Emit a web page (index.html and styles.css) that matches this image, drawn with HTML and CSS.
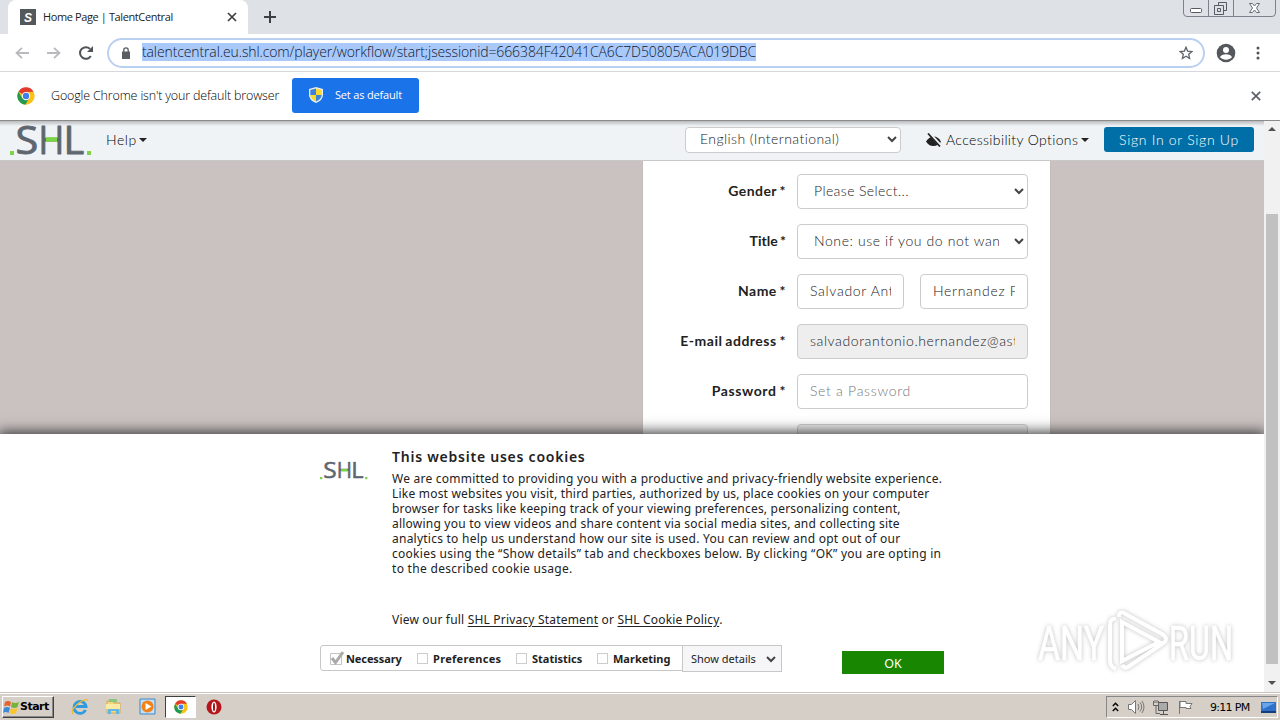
FILE: index.html
```
<!DOCTYPE html>
<html lang="en">
<head>
<meta charset="utf-8">
<title>Home Page | TalentCentral</title>
<link rel="stylesheet" href="styles.css">
</head>
<body>
<svg width="0" height="0" class="defs">
  <symbol id="chrome" viewBox="0 0 48 48">
    <circle cx="24" cy="24" r="23" fill="#fbc116"/>
    <path d="M24 24 4 12.500A23 23 0 0 1 44 12.500L24 13z" fill="#e33b2e"/>
    <path d="M4 12.500A23 23 0 0 0 22 47L33 29 24 35 14 30z" fill="#219a50"/>
    <circle cx="24" cy="24" r="11" fill="#fff"/><circle cx="24" cy="24" r="8.500" fill="#3f7fe8"/>
  </symbol>
  <symbol id="chev" viewBox="0 0 10 8"><path d="M1 2l4 4 4-4" fill="none" stroke="#444" stroke-width="2"/></symbol>
  <symbol id="shl" viewBox="0 0 82 32">
    <text class="shl-text" x="5.500" y="29.500" textLength="23" lengthAdjust="spacingAndGlyphs">S</text>
    <text class="shl-text" x="28.500" y="29.500" textLength="26" lengthAdjust="spacingAndGlyphs">H</text>
    <text class="shl-text" x="53.500" y="29.500" textLength="21" lengthAdjust="spacingAndGlyphs">L</text>
    <path d="M36 15.500h11" stroke="#7bd644" stroke-width="4.500"/>
    <path d="M0 27h4v4H0zM77 27h4v4h-4z" fill="#7bd644"/>
  </symbol>
</svg>

<header class="tabstrip">
  <div class="tab">
    <svg class="favicon" width="16" height="16"><rect width="16" height="16" fill="#53585c"/><text x="4" y="12.500" class="fav-s">S</text></svg>
    <span class="tab-title">Home Page | TalentCentral</span>
    <svg width="10" height="10" class="tab-x"><path d="M1 1l8 8M9 1L1 9" stroke="#3c4043" stroke-width="1.700"/></svg>
  </div>
  <svg class="plus" width="12" height="12"><path d="M6 0v12M0 6h12" stroke="#3c4043" stroke-width="2"/></svg>
  <svg class="winbtns" width="94" height="18" fill="none" stroke="#7c818b">
    <path d="M.5 0v13q0 3.500 3.500 3.500h85q3.500 0 3.500-3.500V0M25.500 0v16.500M50.500 0v16.500"/>
    <rect x="7.500" y="8.500" width="11" height="4" rx="1" fill="#fff" stroke="#555a63"/>
    <path d="M35.500 5.500v-3h8v8h-3M31.500 5.500h9v9h-9zM34.500 8.500h3v3h-3z" stroke="#555a63"/>
    <path d="M66.500 3.500h3l2 2.500 2-2.500h3L73.500 8l3 4.500h-3l-2-2.500-2 2.500h-3l3-4.500z" fill="#fff" stroke="#666b74"/>
  </svg>
</header>

<div class="toolbar">
  <svg class="arrow" width="14" height="12" fill="none" stroke="#b8babd" stroke-width="1.800"><path d="M14 6H1.500M7 .8L1.500 6 7 11.200"/></svg>
  <svg class="arrow" width="14" height="12" fill="none" stroke="#b8babd" stroke-width="1.800"><path d="M0 6h12.500M7 .8L12.500 6 7 11.200"/></svg>
  <svg class="reload" width="14" height="14" fill="none"><path d="M11.800 10A5.800 5.800 0 1 1 11 2.900" stroke="#505357" stroke-width="2"/><path d="M14 0v6H8z" fill="#505357"/></svg>
  <div class="omnibox">
    <svg class="lock" width="8" height="12"><path d="M0 4.500h8V12H0z" fill="#5a5d61"/><path d="M1.800 5V3a2.200 2.200 0 0 1 4.400 0v2" fill="none" stroke="#5a5d61" stroke-width="1.300"/></svg>
    <span class="url">talentcentral.eu.shl.com/player/workflow/start;jsessionid=666384F42041CA6C7D50805ACA019DBC</span>
    <svg class="star" width="14" height="14" viewBox="0 0 14 14"><path d="M7 1.200l1.600 3.900 4.300.4-3.200 2.800.9 4.200L7 10.300l-3.600 2.200.9-4.200L1.100 5.500l4.300-.4z" fill="none" stroke="#5f6368" stroke-width="1.300"/></svg>
  </div>
  <svg class="avatar" width="20" height="20"><circle cx="10" cy="10" r="9.300" fill="#54575b"/><circle cx="10" cy="7" r="3" fill="#fff"/><path d="M4 14.200c1-4 11-4 12 0-3 3.300-9 3.300-12 0z" fill="#fff"/></svg>
  <svg class="dots" width="4" height="14" fill="#505357"><circle cx="2" cy="2" r="1.500"/><circle cx="2" cy="7" r="1.500"/><circle cx="2" cy="12" r="1.500"/></svg>
</div>

<div class="infobar">
  <svg width="18" height="18"><use href="#chrome"/></svg>
  <span class="info-text">Google Chrome isn't your default browser</span>
  <div class="default-btn">
    <svg width="14" height="16" viewBox="0 0 14 16"><path d="M7 0l7 2v6q0 5-7 8-7-3-7-8V2z" fill="#e8eef7"/><path d="M7 1.500V8H1.300V3z" fill="#3f83d8"/><path d="M7 1.500V8h5.700V3z" fill="#fbd92f"/><path d="M7 8v6.500Q1.500 12 1.300 8z" fill="#fbd92f"/><path d="M7 8v6.500Q12.500 12 12.700 8z" fill="#3f83d8"/></svg>
    <span>Set as default</span>
  </div>
  <svg class="info-x" width="10" height="10"><path d="M.8.8l8.400 8.400M9.200.8L.8 9.200" stroke="#5f6368" stroke-width="1.800"/></svg>
</div>

<main class="viewport">
  <div class="page">
    <nav class="nav">
      <svg class="logo" width="82" height="32"><use href="#shl"/></svg>
      <span class="help">Help</span><i class="caret"></i>
      <div class="lang"><span>English (International)</span><svg width="10" height="8"><use href="#chev"/></svg></div>
      <svg class="eye" width="16" height="14"><path d="M0 8.500Q3 4 7 3.500q6 0 8 5.500-4 4.500-8 4-4 0-7-4.500z" fill="#222"/><path d="M3 0l12 13" stroke="#eff3f6" stroke-width="3"/><path d="M2 .5L14 13.500" stroke="#222" stroke-width="1.700"/></svg>
      <span class="access">Accessibility Options</span><i class="caret"></i>
      <div class="sign"><span>Sign In or Sign Up</span></div>
    </nav>
    <section class="backdrop">
      <form class="card">
        <div class="row"><label class="l-gender">Gender *</label><div class="field select"><span class="v-please">Please Select...</span><svg width="10" height="8"><use href="#chev"/></svg></div></div>
        <div class="row"><label class="l-title">Title *</label><div class="field select"><span class="v-none">None: use if you do not want</span><svg width="10" height="8"><use href="#chev"/></svg></div></div>
        <div class="row"><label class="l-name">Name *</label><div class="field first"><span>Salvador Ant</span></div><div class="field last"><span>Hernandez P</span></div></div>
        <div class="row"><label class="l-email">E-mail address *</label><div class="field disabled"><span class="v-email">salvadorantonio.hernandez@ast</span></div></div>
        <div class="row"><label class="l-pass">Password *</label><div class="field"><span class="v-pass">Set a Password</span></div></div>
        <div class="row"><label></label><div class="field disabled"></div></div>
      </form>
    </section>
    <section class="cookies">
      <div class="cookie-top">
        <svg class="logo-small" width="48" height="19" viewBox="0 0 82 32"><use href="#shl" width="82" height="32"/></svg>
        <div class="cookie-copy">
          <h2>This website uses cookies</h2>
          <p class="copy"><span class="c1">We are committed to providing you with a productive and privacy-friendly website experience.</span><span class="c2">Like most websites you visit, third parties, authorized by us, place cookies on your computer</span><span class="c3">browser for tasks like keeping track of your viewing preferences, personalizing content,</span><span class="c4">allowing you to view videos and share content via social media sites, and collecting site</span><span class="c5">analytics to help us understand how our site is used. You can review and opt out of our</span><span class="c6">cookies using the “Show details” tab and checkboxes below. By clicking “OK” you are opting in</span><span class="c7">to the described cookie usage.</span></p>
          <p class="links">View our full <u>SHL Privacy Statement</u> or <u>SHL Cookie Policy</u>.</p>
        </div>
      </div>
      <div class="controls">
        <div class="checks">
          <div class="check w1"><svg width="14" height="14"><path d="M.5 2.500h11v11H.5z" fill="#fff" stroke="#c4c4c4"/><path d="M2 7l3.500 4.500L13 1" fill="none" stroke="#aaa" stroke-width="3"/></svg><b>Necessary</b></div>
          <div class="check w2"><i></i><b>Preferences</b></div>
          <div class="check w3"><i></i><b>Statistics</b></div>
          <div class="check w4"><i></i><b>Marketing</b></div>
        </div>
        <div class="details"><span>Show details</span><svg width="10" height="8"><use href="#chev"/></svg></div>
        <div class="ok">OK</div>
      </div>
    </section>
  </div>
  <aside class="scroll"><i class="up"></i><div class="thumb"></div><i class="down"></i></aside>
  <svg class="watermark" width="204" height="70">
    <g class="wm-ink">
      <text x="4" y="53" textLength="66" lengthAdjust="spacingAndGlyphs">ANY</text>
      <text x="135" y="53" textLength="64" lengthAdjust="spacingAndGlyphs">RUN</text>
      <path d="M82 12q-6-1-6 6v35q0 7 6 9M88 15v39l37-19zM88 6q-3-1-3 4M88 5l40 22q8 5 0 10L94 60q-4 2-6-2" fill="none" stroke="#fff" stroke-width="4"/>
    </g>
  </svg>
</main>

<footer class="taskbar">
  <div class="start"><svg width="17" height="16"><path d="M2 3q3-2 6 0L7 7.500q-3-2-6 0z" fill="#e8622c"/><path d="M9 3q3 2 7 0l-1.500 5q-3 2-6.500 0z" fill="#77b33b"/><path d="M1 9q3-2 6 0l-1.500 5q-3-2-5.500 0z" fill="#3c8ad8"/><path d="M8 9q3 2 6.500 0L13 14q-3 2-6.500 0z" fill="#fac52d"/></svg><b>Start</b></div>
  <svg class="ql ie" width="18" height="18" fill="none"><path d="M14.500 12A6 6 0 1 1 15 8.500H5" stroke="#2e9ae0" stroke-width="2.800"/><path d="M2 16Q-1 12 8 5q7-5 9-2.500" stroke="#efba31" stroke-width="1.300"/></svg>
  <svg class="ql folder" width="17" height="17"><path d="M2 3h6l1 2h6v10H2z" fill="#f5d779" stroke="#d1aa50"/><path d="M4 1h8v3H4z" fill="#8bc581"/><path d="M1 6h14v5H1z" fill="#fbeaa3"/><path d="M3 16v-5h11v5h-3v-3H6v3z" fill="#63b7df"/></svg>
  <svg class="ql media" width="17" height="17"><path d="M1 1h15v15H1z" fill="#c5def5" stroke="#3b88c8"/><circle cx="8.500" cy="8.500" r="6" fill="#f28116"/><path d="M6.500 5l6 3.500-6 3.500z" fill="#fff"/></svg>
  <div class="active-task"><svg width="14" height="14"><use href="#chrome"/></svg></div>
  <svg class="opera" width="16" height="16"><circle cx="8" cy="8" r="7.500" fill="#b5161b"/><ellipse cx="8" cy="8" rx="2.600" ry="5.500" fill="#fff"/><ellipse cx="8" cy="8" rx="1" ry="4.300" fill="#9c1013"/></svg>
  <div class="tray">
    <svg width="7" height="10" fill="none" stroke="#000" stroke-width="1.400"><path d="M.8 4l2.700-2.700L6.200 4M.8 9l2.700-2.700L6.200 9"/></svg>
    <svg class="spk" width="17" height="14" fill="none" stroke="#777"><path d="M.5 4.500h3l4-4v13l-4-4h-3z" fill="#fff"/><path d="M10 4q2 3 0 6M12 2.500q3.500 4.500 0 9M14 1q4 6 0 12"/></svg>
    <svg class="net" width="16" height="15" fill="none" stroke="#555"><path d="M5.500 2.500h9v8h-9zM7 14.500h8M10.500 11v3" fill="#aaa"/><path d="M.5 1v4.500h5V1M2 0v3M4 0v3M3 5.500v8h4" stroke="#666"/></svg>
    <svg class="flag" width="16" height="15"><path d="M1.500 1v13M2 1.500h6v2h6l-2 3 1 2H8v-1H2z" fill="#fff" stroke="#777"/></svg>
    <span class="clock">9:11 PM</span>
    <svg width="15" height="13"><path d="M0 1h15v9H0z" fill="#2f70c9"/><path d="M1 2h13L2 8z" fill="#68a6ea"/><path d="M0 10h15v2H0z" fill="#163e7c"/></svg>
  </div>
</footer>
</body>
</html>
```
FILE: styles.css
```
*{box-sizing:border-box}
body{margin:0;width:1280px;height:720px;overflow:hidden;display:flex;flex-direction:column;font-family:"Open Sans","Noto Sans",sans-serif;color:#222;background:#fff;white-space:nowrap}
svg{display:block;flex:none}
.defs{height:0;position:absolute}
h2,p{margin:0}
.tabstrip{height:34px;flex:none;background:#dee1e6;display:flex;align-items:flex-start}
.tab{width:240px;height:34px;margin-left:8px;background:#fff;border-radius:8px 8px 0 0;display:flex;align-items:center;padding-left:12px}
.fav-s{font:italic 700 12px "Liberation Sans",sans-serif;fill:#fff}
.tab-title{font-size:11px;line-height:15px;margin:0 0 1px 7px;width:184px;letter-spacing:-.39px}
.plus{margin:11px 0 0 16px}
.winbtns{margin-left:auto;margin-right:3px}
.toolbar{height:38px;flex:none;border-bottom:1px solid #d6d8db;display:flex;align-items:center}
.arrow{margin-left:15px;margin-right:3px}
.reload{margin-left:15px;margin-right:14px}
.omnibox{width:1098px;height:30px;border:2px solid #bbd0f0;border-radius:15px;display:flex;align-items:center;padding-left:13px}
.url{margin:0 0 1px 12px;background:#a9c9fa;height:18px;line-height:18px;font-size:14px;font-weight:300;color:#101a30;width:614px;letter-spacing:-.115px}
.star{margin-left:423px}
.avatar{margin-left:11px}
.dots{margin-left:20px}
.infobar{height:49px;flex:none;display:flex;align-items:center;padding-left:17px;border-bottom:1px solid #8b8b8b}
.info-text{margin:0 0 2px 16px;width:241px;font-size:12.5px;font-weight:300;letter-spacing:-.16px;color:#000}
.default-btn{width:127px;height:35px;margin-bottom:2px;border-radius:3px;background:#1a73e8;display:flex;align-items:center;padding-left:17px;color:#fff;font-size:11px;letter-spacing:-.17px}
.default-btn span{margin:0 0 1px 12px}
.info-x{margin-left:auto;margin-right:19px}
.viewport{height:571px;flex:none;display:flex;position:relative}
.page{width:1264px;height:571px;overflow:hidden}
.nav{height:40px;background:linear-gradient(#b9bbbd,#eff3f6 5px);border-bottom:1px solid #c8c8c8;display:flex;align-items:center;padding:0 0 2px 10px;font-size:14px;font-weight:300;font-family:Lato,"Open Sans",sans-serif;letter-spacing:.3px}
.shl-text{font:400 38px "Open Sans",sans-serif;fill:#5e666f;stroke:#5e666f;stroke-width:.9;stroke-linejoin:round}
.help{margin-left:14px;width:32px;letter-spacing:.6px;color:#000}
.caret{border:4px solid transparent;border-top-color:#222;border-bottom:0;margin-left:1px}
.lang{width:216px;height:26px;border:1px solid #ccc;border-radius:4px;background:#fff;margin-left:538px;display:flex;align-items:center;justify-content:space-between;padding:0 3px 2px 14px;color:#222;letter-spacing:.43px}
.eye{margin-left:25px}
.access{margin-left:4px;width:134px;letter-spacing:.37px;color:#000}
.sign{margin-left:15px;width:150px;height:25px;border-radius:3px;background:#006fa7;color:#fff;display:flex;align-items:center;justify-content:center;letter-spacing:.7px}
.backdrop{height:273px;background:#cac2c1;overflow:hidden}
.card{width:409px;margin-left:642px;background:#fff;border:1px solid #c4bcbc;border-width:0 1px;padding-top:13px;font-family:Lato,"Open Sans",sans-serif;font-size:14px}
.row{display:flex;height:50px}
label{width:143px;height:35px;line-height:34px;text-align:right;font-weight:700;margin-right:11px;letter-spacing:.2px;word-spacing:-1px}
.l-email{letter-spacing:.5px}.l-gender{letter-spacing:.45px}.l-name{letter-spacing:.45px}.l-pass{letter-spacing:.58px}.l-title{letter-spacing:0}
.field{width:231px;height:35px;border:1px solid #ccc;border-radius:4px;padding:0 12px 2px;line-height:31px;color:#222;font-weight:300;display:flex;align-items:center;overflow:hidden;letter-spacing:.7px}
.field span{overflow:hidden;display:block}
.select{padding:0 3px 2px 16px;justify-content:space-between}
.select span{width:185px}
.v-please{letter-spacing:.4px}
.v-none{letter-spacing:.6px}
.v-email{letter-spacing:.6px}
.first{width:107px;margin-right:16px}
.last{width:108px}
.disabled{background:#eee}
.v-pass{color:#777}
.cookies{position:relative;height:258px;background:#fff;box-shadow:0 0 13px 2px #333;font-family:"Noto Sans","Open Sans",sans-serif;padding:14px 0 0 320px}
.cookie-top{display:flex;height:197px}
.logo-small{margin-top:13px}
.cookie-copy{margin-left:24px}
h2{font-size:14px;line-height:18px;font-weight:600;letter-spacing:.76px}
.copy{margin-top:5px;font-size:12px;line-height:15px}
.copy span{display:block}
.c1{letter-spacing:.23px}.c2{letter-spacing:.21px}.c3{letter-spacing:.2px}.c4{letter-spacing:.22px}.c5{letter-spacing:.24px}.c6{letter-spacing:.27px}.c7{letter-spacing:.3px}
.links{margin-top:36px;font-size:12px;line-height:15px;letter-spacing:.19px}
u{text-underline-offset:2px}
.controls{display:flex;font-size:11px}
.checks{width:363px;height:26px;border:1px solid #c7c7c7;border-radius:3px 0 0 3px;display:flex;align-items:center;padding-left:9px}
.check{display:flex;align-items:center}
.check b{margin-left:3px}
.check i{width:11px;height:11px;border:1px solid #ccc;margin-right:2px}
.w1{width:87px;letter-spacing:-.1px}.w1 b{margin-left:2px}.w2{width:99px;letter-spacing:.3px}.w3{width:81px}
.details{width:100px;height:27px;margin-left:-1px;border:1px solid #c7c7c7;background:#f6f6f8;display:flex;align-items:center;justify-content:space-between;padding:0 5px 0 8px}
.ok{width:102px;height:23px;margin:6px 0 0 60px;background:#188600;color:#fff;text-align:center;line-height:25px;font-size:12.5px}
.scroll{width:16px;background:#f1f1f1;display:flex;flex-direction:column;align-items:center}
.up{margin-top:6px;border:4px solid transparent;border-bottom-color:#505050;border-top:0}
.thumb{width:12px;height:450px;margin-top:83px;background:#c1c1c1}
.down{margin-top:17px;border:4px solid transparent;border-top-color:#505050;border-bottom:0}
.watermark{position:absolute;left:1034px;top:486px}
.wm-ink{filter:drop-shadow(0 0 2px rgba(0,0,0,.25));fill:#fff;stroke:#fff;stroke-width:.7;font:400 49px Roboto,sans-serif}
.taskbar{height:28px;flex:none;background:#d6cfc7;border-top:1px solid #c9c4bd;box-shadow:inset 0 1px #fff;display:flex;align-items:center;padding-left:2px}
.start{width:52px;height:22px;border:1px solid;border-color:#fff #404040 #404040 #fff;box-shadow:inset -1px -1px #888;display:flex;align-items:center;color:#000;font:11px "DejaVu Sans",sans-serif;letter-spacing:-.5px}
.ie{margin-left:17px}.folder{margin-left:16px}.media{margin-left:17px}
.active-task{margin-left:9px;width:31px;height:22px;background:#fff;border:1px solid #555;border-color:#404040 #fff #fff #404040;display:flex;align-items:center;justify-content:center}
.opera{margin-left:10px}
.tray{margin:1px 2px 0 auto;width:172px;height:22px;border:1px solid;border-color:#888 #fff #fff #888;display:flex;align-items:center;padding-left:5px;color:#000}
.spk{margin-left:9px}.net{margin-left:8px}.flag{margin-left:9px}
.clock{margin-left:16px;width:51px;font:11px "DejaVu Sans",sans-serif;letter-spacing:-.7px}
```
